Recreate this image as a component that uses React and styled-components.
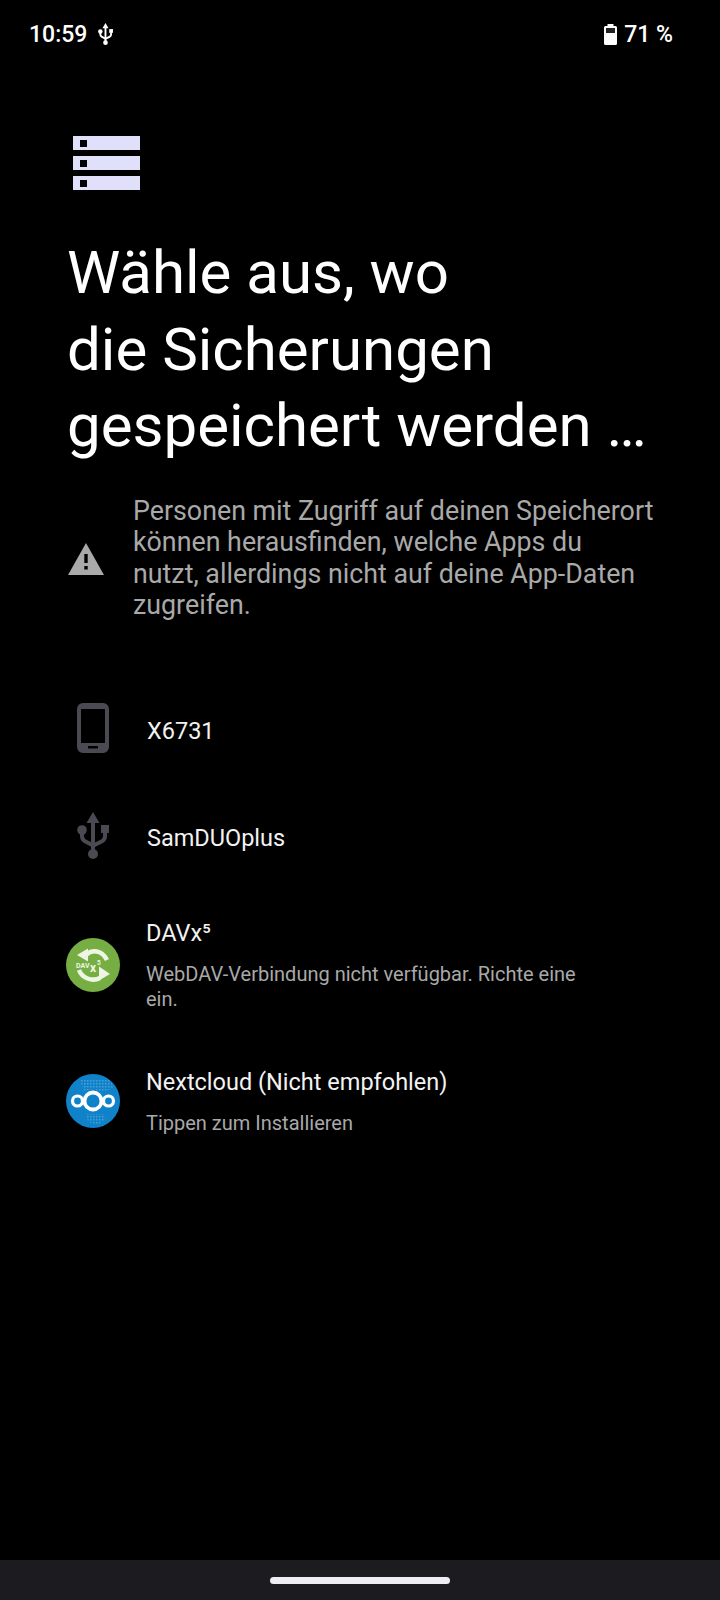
import React from 'react';
import styled, { createGlobalStyle } from 'styled-components';

const GlobalStyle = createGlobalStyle`
    html, body {
        margin: 0;
        padding: 0;
        background: #000;
    }
    * {
        box-sizing: border-box;
    }
`;

const Screen = styled.div`
    width: 720px;
    height: 1600px;
    display: flex;
    flex-direction: column;
    background: #000;
    color: #fff;
    font-family: Roboto, "Noto Sans", sans-serif;
    overflow: hidden;
`;

const StatusBar = styled.header`
    height: 68px;
    flex-shrink: 0;
    display: flex;
    justify-content: space-between;
    align-items: center;
    padding: 0 47px 0 29px;
    font-size: 23px;
    font-weight: 500;
`;

const StatusGroup = styled.div`
    display: flex;
    align-items: center;
    gap: ${p => p.$gap}px;
`;

const Content = styled.main`
    flex: 1;
    padding: 68px 0 0 68px;
`;

const ServerIcon = styled.div`
    display: flex;
    flex-direction: column;
    gap: 6px;
    width: 67px;
    margin-left: 5px;
`;

const ServerBar = styled.div`
    height: 14px;
    padding: 4px 7px;
    background: #e1e0fb;
`;

const ServerLed = styled.div`
    width: 7px;
    height: 7px;
    background: #000;
`;

const Title = styled.h1`
    margin: 45px 0 0 -1px;
    font-size: 60px;
    font-weight: 400;
    line-height: 76.5px;
    white-space: nowrap;
`;

const Warning = styled.section`
    display: flex;
    align-items: center;
    gap: 29px;
    margin-top: 31px;
`;

const WarningText = styled.p`
    margin: 0;
    font-size: 26.8px;
    line-height: 31.6px;
    color: #a9a9a9;
    white-space: nowrap;
`;

const Options = styled.ul`
    list-style: none;
    margin: 59px 0 0;
    padding: 0;
`;

const Option = styled.li`
    display: flex;
    align-items: center;
    height: ${p => p.$height}px;
`;

const OptionIcon = styled.div`
    width: ${p => (p.$brand ? 80 : 79)}px;
    flex-shrink: 0;
    display: flex;
    justify-content: ${p => (p.$brand ? 'flex-start' : 'center')};
    padding-right: ${p => (p.$brand ? 0 : 29)}px;
    margin: ${p => (p.$brand ? '0 0 0 -2px' : '0 0 6px')};
`;

const OptionBody = styled.div`
    width: 440px;
`;

const OptionName = styled.div`
    font-size: 23.5px;
    line-height: 30px;
    color: #f2f2f2;
`;

const OptionHint = styled.div`
    margin-top: 14px;
    font-size: 20px;
    line-height: 25px;
    color: #a9a9a9;
`;

const NavBar = styled.footer`
    height: 40px;
    flex-shrink: 0;
    display: flex;
    justify-content: center;
    align-items: center;
    background: #1c1c20;
`;

const NavHandle = styled.div`
    width: 180px;
    height: 7px;
    border-radius: 4px;
    background: #eeedf4;
`;

const UsbIcon = ({ height, color }) => (
    <svg width={height * 32 / 47} height={height} viewBox="0 0 32 47" fill={color}>
        <path d="M16 0l6.500 11h-4.500v28h-4V11H9.500z" />
        <circle cx="16" cy="42" r="5" />
        <circle cx="5" cy="18" r="4.800" />
        <path d="M24 13h8v8h-8z" />
        <path d="M3 20h4v4c0 2 1 3 2.500 3.800l7.500 4v4.500l-9.500-5C4.500 29.700 3 27.500 3 24zM26 19h4v5c0 3.500-1.500 5.700-4.500 7.300L16 36v-4.500l7.500-3.700C25 27 26 26 26 24z" />
    </svg>
);

const BatteryIcon = () => (
    <svg width="13" height="21" viewBox="0 0 13 21">
        <path d="M3.500 0h6v2h2A1.500 1.500 0 0 1 13 3.500v16a1.500 1.500 0 0 1-1.500 1.500h-10A1.500 1.500 0 0 1 0 19.500v-16A1.500 1.500 0 0 1 1.500 2h2z" fill="#fff" />
        <path d="M2 4h9v5H2z" fill="#222" />
    </svg>
);

const WarningIcon = () => (
    <svg width="36" height="32" viewBox="0 0 36 32">
        <path d="M18 0l18 32H0z" fill="#a9a9a9" />
        <path d="M16.300 11h3.400v9h-3.400zM16.300 23h3.400v3.400h-3.400z" fill="#000" />
    </svg>
);

const PhoneIcon = () => (
    <svg width="32" height="50" viewBox="0 0 32 50">
        <path fillRule="evenodd" d="M6 0h20a6 6 0 0 1 6 6v38a6 6 0 0 1-6 6H6a6 6 0 0 1-6-6V6a6 6 0 0 1 6-6zM4 6v34h24V6zM11 43v2.500h10V43z" fill="#4b4a52" />
    </svg>
);

const DavxLogo = () => (
    <svg width="54" height="54" viewBox="0 0 54 54">
        <circle cx="27" cy="27" r="27" fill="#76ae44" />
        <g fill="none" stroke="#eef5e4" strokeWidth="4.500">
            <path d="M20 17c6-6 16-5 21 5" />
            <path d="M13 32c3 8 13 12 21 8" />
        </g>
        <path d="M11 17l11-6.500v13z" fill="#eef5e4" />
        <path d="M44 36l-11 6.500v-14z" fill="#eef5e4" />
        <text x="10" y="30" fontFamily="Roboto, sans-serif" fontWeight="700" fontSize="7" fill="#eef5e4">DAV</text>
        <text x="24" y="34" fontFamily="Roboto, sans-serif" fontWeight="700" fontSize="12" fill="#eef5e4">x</text>
        <text x="31" y="27" fontFamily="Roboto, sans-serif" fontWeight="700" fontSize="6.500" fill="#eef5e4">5</text>
    </svg>
);

const NextcloudLogo = () => (
    <svg width="54" height="54" viewBox="0 0 54 54">
        <defs>
            <pattern id="dots" width="3" height="3" patternUnits="userSpaceOnUse">
                <rect width="1.500" height="1.500" fill="#4a9fd8" />
            </pattern>
        </defs>
        <circle cx="27" cy="27" r="27" fill="#0f82c9" />
        <path d="M14 6h30l4 8-12 4-8-3-10 2zM20 40h18l2 5-8 6-10-3z" fill="url(#dots)" />
        <g fill="none" stroke="#fff">
            <circle cx="11.500" cy="27" r="5" strokeWidth="3.200" />
            <circle cx="27" cy="27" r="8.500" strokeWidth="3.800" />
            <circle cx="42.500" cy="27" r="5" strokeWidth="3.200" />
        </g>
    </svg>
);

export default function App() {
    return (
        <Screen>
            <GlobalStyle />
            <StatusBar>
                <StatusGroup $gap={11}>
                    <span>10:59</span>
                    <UsbIcon height={22} color="#fff" />
                </StatusGroup>
                <StatusGroup $gap={7}>
                    <BatteryIcon />
                    <span>71 %</span>
                </StatusGroup>
            </StatusBar>
            <Content>
                <ServerIcon>
                    <ServerBar><ServerLed /></ServerBar>
                    <ServerBar><ServerLed /></ServerBar>
                    <ServerBar><ServerLed /></ServerBar>
                </ServerIcon>
                <Title>
                    Wähle aus, wo<br />
                    die Sicherungen<br />
                    gespeichert werden …
                </Title>
                <Warning>
                    <WarningIcon />
                    <WarningText>
                        Personen mit Zugriff auf deinen Speicherort<br />
                        können herausfinden, welche Apps du<br />
                        nutzt, allerdings nicht auf deine App-Daten<br />
                        zugreifen.
                    </WarningText>
                </Warning>
                <Options>
                    <Option $height={101}>
                        <OptionIcon><PhoneIcon /></OptionIcon>
                        <OptionBody><OptionName>X6731</OptionName></OptionBody>
                    </Option>
                    <Option $height={113}>
                        <OptionIcon><UsbIcon height={47} color="#4b4a52" /></OptionIcon>
                        <OptionBody><OptionName>SamDUOplus</OptionName></OptionBody>
                    </Option>
                    <Option $height={141}>
                        <OptionIcon $brand><DavxLogo /></OptionIcon>
                        <OptionBody>
                            <OptionName>DAVx⁵</OptionName>
                            <OptionHint>WebDAV-Verbindung nicht verfügbar. Richte eine ein.</OptionHint>
                        </OptionBody>
                    </Option>
                    <Option $height={131}>
                        <OptionIcon $brand><NextcloudLogo /></OptionIcon>
                        <OptionBody>
                            <OptionName>Nextcloud (Nicht empfohlen)</OptionName>
                            <OptionHint>Tippen zum Installieren</OptionHint>
                        </OptionBody>
                    </Option>
                </Options>
            </Content>
            <NavBar><NavHandle /></NavBar>
        </Screen>
    );
}
